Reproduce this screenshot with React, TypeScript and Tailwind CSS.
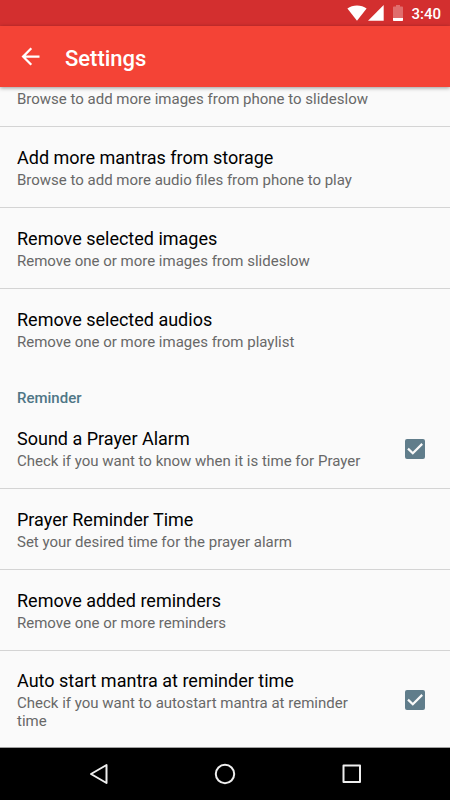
import { useId, useState } from 'react'

interface SettingRowProps {
  title?: string
  summary: string
  className?: string
}

const RowText = ({ title, summary }: { title?: string; summary: string }) => (
  <>
    {title && <span className="block text-lg leading-6 text-black">{title}</span>}
    <span className="mt-px block text-[15px] leading-[18px] text-[#686868]">{summary}</span>
  </>
)

const SettingRow = ({ title, summary, className = 'border-b border-[#d4d4d4] pt-[19px] pb-[18px]' }: SettingRowProps) => (
  <button type="button" className={`block w-full px-[17px] text-left ${className}`}>
    <RowText title={title} summary={summary} />
  </button>
)

const CheckRow = ({ title, summary, className }: SettingRowProps) => {
  const id = useId()
  const [checked, setChecked] = useState(true)

  return (
    <div className={`flex items-center justify-between pl-[17px] pr-[25px] ${className}`}>
      <label htmlFor={id} className="min-w-0 flex-1 pr-8">
        <RowText title={title} summary={summary} />
      </label>
      <span className="relative h-5 w-5 shrink-0">
        <input
          id={id}
          type="checkbox"
          checked={checked}
          onChange={(e) => setChecked(e.target.checked)}
          className="block h-5 w-5 appearance-none rounded-[2px] border-2 border-[#607d8b] checked:bg-[#607d8b]"
        />
        {checked && (
          <svg viewBox="0 0 20 20" className="pointer-events-none absolute inset-0 h-5 w-5" fill="none" stroke="#fafafa" strokeWidth="2.2">
            <path d="M3 9.600 7.800 14.300 17.200 4.900" />
          </svg>
        )}
      </span>
    </div>
  )
}

const StatusBar = () => (
  <div className="flex h-[26px] shrink-0 items-center justify-end bg-[#d32f2f] pr-[9px] text-white">
    <svg width="20" height="16" viewBox="0 0 20 16" fill="currentColor" aria-hidden="true">
      <path d="M10 15.700.4 3.600C3 1.600 6.300.6 10 .6s7 1 9.600 3z" />
    </svg>
    <svg className="ml-px" width="16" height="16" viewBox="0 0 16 16" fill="currentColor" aria-hidden="true">
      <path d="M0 15.700 15.700 0v15.700z" />
    </svg>
    <svg className="ml-[9px]" width="10" height="16" viewBox="0 0 10 16" fill="currentColor" aria-hidden="true">
      <path d="M3 0h4v1.600h2.200q.8 0 .8.800V13H0V2.400q0-.8.800-.8H3z" opacity=".3" />
      <path d="M0 13h10v2.200q0 .8-.8.800H.8Q0 16 0 15.200z" />
    </svg>
    <span className="ml-2 pt-0.5 text-[15px] leading-5 font-medium">3:40</span>
  </div>
)

const NavBar = () => (
  <nav className="flex h-[53px] shrink-0 items-center justify-center gap-[103px] border-t border-[#a0a0a0] bg-black text-[#eeeeee]">
    <button type="button" aria-label="Back">
      <svg className="block" width="24" height="24" viewBox="0 0 24 24" fill="none" stroke="currentColor" strokeWidth="2" strokeLinejoin="round">
        <path d="M20.500 3v18L5 12z" />
      </svg>
    </button>
    <button type="button" aria-label="Home">
      <svg className="block" width="24" height="24" viewBox="0 0 24 24" fill="none" stroke="currentColor" strokeWidth="2">
        <circle cx="12" cy="12" r="9.200" />
      </svg>
    </button>
    <button type="button" aria-label="Recent apps">
      <svg className="block" width="24" height="24" viewBox="0 0 24 24" fill="none" stroke="currentColor" strokeWidth="2" strokeLinejoin="round">
        <path d="M3.500 3.500h16.500v16.500H3.500z" />
      </svg>
    </button>
  </nav>
)

export default function App() {
  return (
    <div className="flex h-screen flex-col bg-[#fafafa] font-[Roboto,sans-serif] antialiased">
      <StatusBar />
      <header className="z-10 flex h-[61px] shrink-0 items-center bg-[#f44336] pl-[17px] text-white shadow-[0_1px_4px_rgba(0,0,0,0.4)]">
        <button type="button" aria-label="Back">
          <svg className="block" width="27" height="27" viewBox="0 0 24 24" fill="currentColor">
            <path d="M20 11H7.830l5.590-5.590L12 4l-8 8 8 8 1.410-1.410L7.830 13H20z" />
          </svg>
        </button>
        <h1 className="ml-[21px] pt-1 text-[22px] leading-7 font-medium">Settings</h1>
      </header>

      <main className="min-h-0 flex-1 overflow-y-auto [scrollbar-width:none]">
        <SettingRow
          summary="Browse to add more images from phone to slideslow"
          className="border-b border-[#d4d4d4] pt-0.5 pb-[18px]"
        />
        <SettingRow title="Add more mantras from storage" summary="Browse to add more audio files from phone to play" />
        <SettingRow title="Remove selected images" summary="Remove one or more images from slideslow" />
        <SettingRow
          title="Remove selected audios"
          summary="Remove one or more images from playlist"
          className="pt-[19px] pb-[18px]"
        />

        <h2 className="px-[17px] pt-[19px] text-[15px] leading-5 font-medium text-[#4f7686]">Reminder</h2>
        <CheckRow
          title="Sound a Prayer Alarm"
          summary="Check if you want to know when it is time for Prayer"
          className="border-b border-[#d4d4d4] pt-[19px] pb-[18px]"
        />
        <SettingRow title="Prayer Reminder Time" summary="Set your desired time for the prayer alarm" />
        <SettingRow title="Remove added reminders" summary="Remove one or more reminders" />
        <CheckRow
          title="Auto start mantra at reminder time"
          summary="Check if you want to autostart mantra at reminder time"
          className="pt-[18px] pb-4"
        />
      </main>

      <NavBar />
    </div>
  )
}
